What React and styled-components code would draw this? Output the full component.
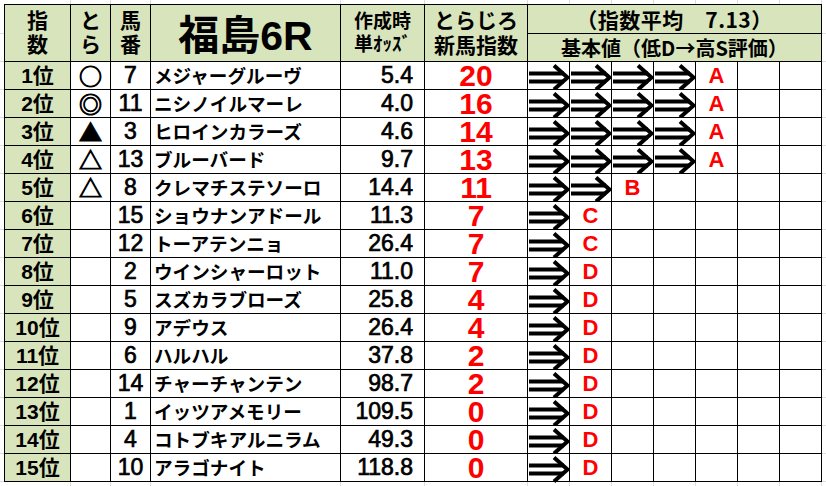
import React from 'react';
import styled, { createGlobalStyle } from 'styled-components';

const GREEN = '#d8e4bc';
const RED = '#ff0000';
const GRID = '#dcdcdc';

// faint spreadsheet gridlines around the table
const colLines = [70, 110, 150, 340, 424, 527, 569, 611, 653, 695, 737, 779, 821];

const GlobalStyle = createGlobalStyle`
	html, body {
		height: 100%;
	}
	body {
		margin: 0;
		color: #000;
		font-family: "Liberation Sans", "Noto Sans CJK JP", sans-serif;
		background-color: #fff;
		background-image:
			${colLines.map(() => `linear-gradient(${GRID}, ${GRID})`).join(', ')},
			repeating-linear-gradient(to bottom, transparent 0, transparent 27px, ${GRID} 27px, ${GRID} 28px);
		background-size:
			${colLines.map(() => '1px 100%').join(', ')},
			100% 100%;
		background-position:
			${colLines.map((x) => `${x}px 0`).join(', ')},
			0 6px;
		background-repeat: no-repeat;
	}
`;

const Sheet = styled.div`
	display: grid;
	grid-template-columns: 65px 39px 39px 189px 83px 102px repeat(7, 41px);
	grid-template-rows: 28px 27px repeat(15, 27px);
	gap: 1px;
	padding: 1px;
	margin: 4px;
	width: max-content;
	background: #000;
`;

const HeadCell = styled.div`
	grid-row: ${(p) => p.$row || 'span 2'};
	grid-column: ${(p) => p.$col || 'auto'};
	background: ${GREEN};
	display: flex;
	flex-direction: column;
	align-items: center;
	justify-content: center;
	font-family: ${(p) => (p.$jp ? '"Noto Sans CJK JP", sans-serif' : '"Liberation Sans", "Noto Sans CJK JP", sans-serif')};
	font-weight: 700;
	font-size: ${(p) => p.$size || 21}px;
	line-height: ${(p) => p.$lh || 24}px;
	letter-spacing: ${(p) => p.$ls || 0}px;
	white-space: nowrap;
`;

const Title = styled(HeadCell)`
	padding-top: 6px;
`;

const Cell = styled.div`
	background: ${(p) => (p.$green ? GREEN : '#fff')};
	display: flex;
	align-items: center;
	justify-content: center;
	font-weight: 700;
	font-size: 20px;
	line-height: 1;
	white-space: nowrap;
	overflow: visible;
`;

const Rank = styled(Cell)`
	font-size: 21px;
`;

const Mark = styled(Cell)`
	font-family: "Noto Sans CJK JP", sans-serif;
	font-size: 23px;
	font-weight: 400;
	-webkit-text-stroke: 1px #000;
`;

const Num = styled(Cell)`
	font-size: 23px;
	font-weight: 400;
	-webkit-text-stroke: 0.7px #000;
`;

const Name = styled(Cell)`
	justify-content: flex-start;
	padding-left: 3px;
	font-family: "Noto Sans CJK JP", sans-serif;
	font-size: 18.6px;
`;

const Odds = styled(Cell)`
	justify-content: flex-end;
	padding-right: 11px;
	font-size: 23px;
	font-weight: 400;
	-webkit-text-stroke: 0.7px #000;
`;

const Score = styled(Cell)`
	color: ${RED};
	font-size: 30px;
`;

const Grade = styled(Cell)`
	color: ${RED};
	font-size: 22px;
`;

const ArrowSvg = styled.svg`
	display: block;
	overflow: visible;
`;

const Arrow = () => (
	<ArrowSvg width="41" height="27" viewBox="0 0 41 27">
		<line x1="1" y1="11.5" x2="36" y2="11.5" stroke="#000" strokeWidth="4" />
		<line x1="1" y1="19.5" x2="36" y2="19.5" stroke="#000" strokeWidth="4" />
		<polyline points="26,3.5 39.5,15.5 26,27.5" fill="none" stroke="#000" strokeWidth="4" />
	</ArrowSvg>
);

const horses = [
	['1位', '○', '7', 'メジャーグルーヴ', '5.4', 20, 4, 'A'],
	['2位', '◎', '11', 'ニシノイルマーレ', '4.0', 16, 4, 'A'],
	['3位', '▲', '3', 'ヒロインカラーズ', '4.6', 14, 4, 'A'],
	['4位', '△', '13', 'ブルーバード', '9.7', 13, 4, 'A'],
	['5位', '△', '8', 'クレマチステソーロ', '14.4', 11, 2, 'B'],
	['6位', '', '15', 'ショウナンアドール', '11.3', 7, 1, 'C'],
	['7位', '', '12', 'トーアテンニョ', '26.4', 7, 1, 'C'],
	['8位', '', '2', 'ウインシャーロット', '11.0', 7, 1, 'D'],
	['9位', '', '5', 'スズカラブローズ', '25.8', 4, 1, 'D'],
	['10位', '', '9', 'アデウス', '26.4', 4, 1, 'D'],
	['11位', '', '6', 'ハルハル', '37.8', 2, 1, 'D'],
	['12位', '', '14', 'チャーチャンテン', '98.7', 2, 1, 'D'],
	['13位', '', '1', 'イッツアメモリー', '109.5', 0, 1, 'D'],
	['14位', '', '4', 'コトブキアルニラム', '49.3', 0, 1, 'D'],
	['15位', '', '10', 'アラゴナイト', '118.8', 0, 1, 'D'],
];

const App = () => {
	return (
		<>
			<GlobalStyle />
			<Sheet>
				<HeadCell>
					<span>指</span>
					<span>数</span>
				</HeadCell>
				<HeadCell>
					<span>と</span>
					<span>ら</span>
				</HeadCell>
				<HeadCell>
					<span>馬</span>
					<span>番</span>
				</HeadCell>
				<Title $size={41} $lh={44}>福島6R</Title>
				<HeadCell $size={19} $lh={23}>
					<span>作成時</span>
					<span>単ｵｯｽﾞ</span>
				</HeadCell>
				<HeadCell $size={21} $lh={25}>
					<span>とらじろ</span>
					<span>新馬指数</span>
				</HeadCell>
				<HeadCell $row="1 / span 1" $col="7 / span 7" $size={21} $ls={0.5} $jp>
					（指数平均　7.13）
				</HeadCell>
				<HeadCell $row="2 / span 1" $col="7 / span 7" $size={20} $jp>
					基本値（低D→高S評価）
				</HeadCell>

				{horses.map(([rank, mark, no, name, odds, score, arrows, grade]) => (
					<React.Fragment key={rank}>
						<Rank $green>{rank}</Rank>
						<Mark>{mark}</Mark>
						<Num>{no}</Num>
						<Name>{name}</Name>
						<Odds>{odds}</Odds>
						<Score>{score}</Score>
						{Array.from({ length: 7 }).map((_, i) => {
							if (i < arrows) return <Cell key={i}><Arrow /></Cell>;
							if (i === arrows) return <Grade key={i}>{grade}</Grade>;
							return <Cell key={i} />;
						})}
					</React.Fragment>
				))}
			</Sheet>
		</>
	);
};

export default App;
